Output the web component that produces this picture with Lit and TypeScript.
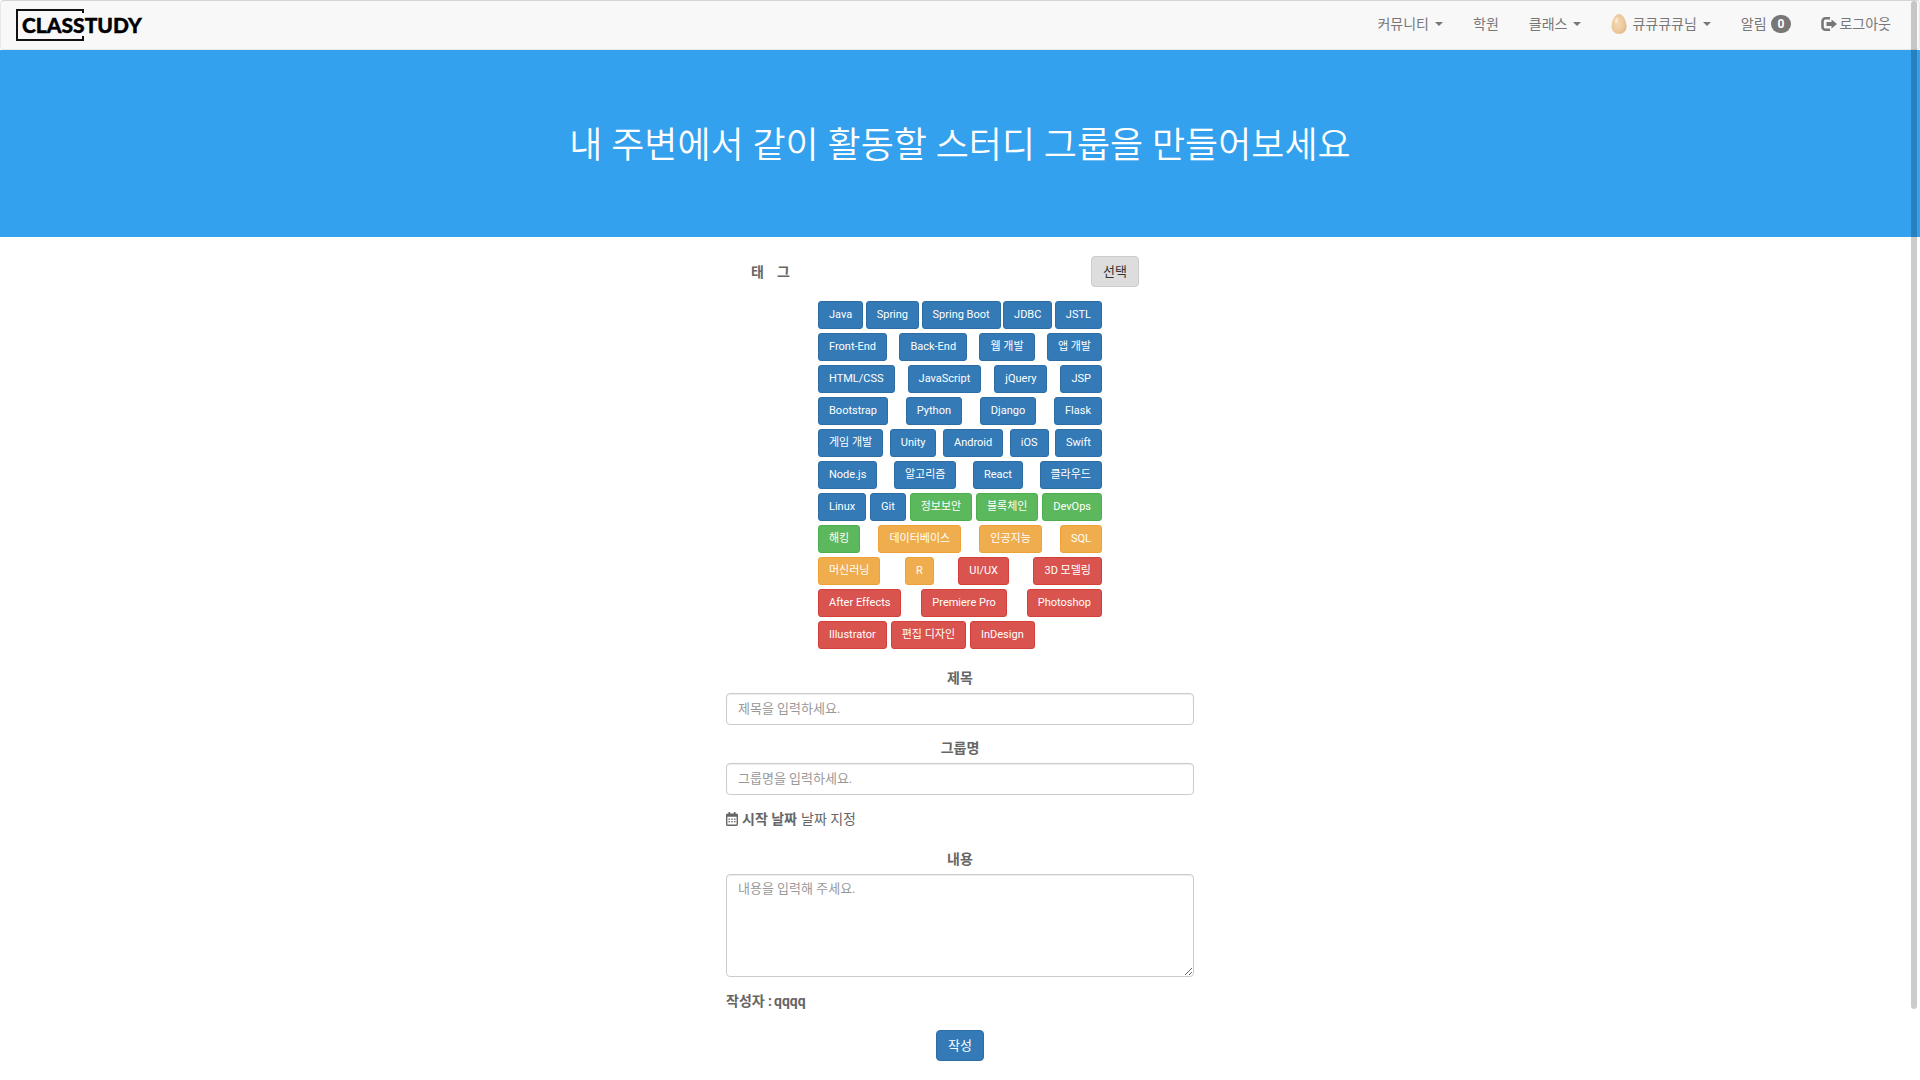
import { LitElement, html, css, svg } from "lit";
import { customElement } from "lit/decorators.js";

type Tone = "primary" | "success" | "warning" | "danger";
type Tag = [string, Tone];

const of = (tone: Tone, ...names: string[]): Tag[] => names.map((n) => [n, tone] as Tag);

const TAG_ROWS: Tag[][] = [
  of("primary", "Java", "Spring", "Spring Boot", "JDBC", "JSTL"),
  of("primary", "Front-End", "Back-End", "웹 개발", "앱 개발"),
  of("primary", "HTML/CSS", "JavaScript", "jQuery", "JSP"),
  of("primary", "Bootstrap", "Python", "Django", "Flask"),
  of("primary", "게임 개발", "Unity", "Android", "iOS", "Swift"),
  of("primary", "Node.js", "알고리즘", "React", "클라우드"),
  [...of("primary", "Linux", "Git"), ...of("success", "정보보안", "블록체인", "DevOps")],
  [...of("success", "해킹"), ...of("warning", "데이터베이스", "인공지능", "SQL")],
  [...of("warning", "머신러닝", "R"), ...of("danger", "UI/UX", "3D 모델링")],
  of("danger", "After Effects", "Premiere Pro", "Photoshop"),
  of("danger", "Illustrator", "편집 디자인", "InDesign"),
];

const eggIcon = html`<svg class="egg" viewBox="0 0 16 20" aria-hidden="true">
  <defs>
    <radialGradient id="shell" cx="0.4" cy="0.45" r="0.65">
      <stop offset="0" stop-color="#f3d9b4" />
      <stop offset="0.65" stop-color="#ecc99c" />
      <stop offset="1" stop-color="#dfb585" />
    </radialGradient>
  </defs>
  <path d="M8 0C12 0 15.500 7 15.500 12.300C15.500 17 12.200 20 8 20S.5 17 .5 12.300C.5 7 4 0 8 0Z" fill="url(#shell)" />
  <ellipse cx="5.500" cy="6.500" rx="1.500" ry="2.800" transform="rotate(22 5.500 6.500)" fill="#faead2" />
</svg>`;

const logoutIcon = html`<svg class="logout" viewBox="0 0 16 14" aria-hidden="true">
  <path d="M9 1.300H4.500A3 3 0 0 0 1.500 4.300V9.700A3 3 0 0 0 4.500 12.700H9" fill="none" stroke="currentColor" stroke-width="2.600" />
  <path d="M10.500 2.500L16 7L10.500 11.500V9H5.500V5H10.500Z" fill="currentColor" />
</svg>`;

const calendarIcon = html`<svg class="calendar" viewBox="0 0 12 14" aria-hidden="true">
  <rect x="0.700" y="2.200" width="10.600" height="11" rx="1" fill="none" stroke="currentColor" stroke-width="1.400" />
  <path d="M.7 2H11.300V4.800H.7ZM2.500 0H4.200V3H2.500ZM7.800 0H9.500V3H7.800Z" fill="currentColor" />
  ${[6.5, 9].map((y) => [2.5, 5.3, 8.1].map((x) => svg`<rect x=${x} y=${y} width="1.400" height="1.400" fill="currentColor" />`))}
</svg>`;

@customElement("app-root")
export class AppRoot extends LitElement {
  static styles = css`
    :host {
      display: block;
      position: relative;
      min-height: 100vh;
      background: #fff;
      color: #666;
      font: 14px/20px Roboto, "Noto Sans CJK KR", sans-serif;
    }
    * { box-sizing: border-box; }
    button, input, textarea { font: inherit; }

    .navbar {
      display: flex;
      justify-content: space-between;
      align-items: center;
      height: 50px;
      padding: 0 13px 0 14px;
      background: #f8f8f8;
      border: 1px solid #e7e7e7;
      border-top-color: #d4d4d4;
      border-radius: 4px;
    }
    .brand { display: block; height: 34px; }
    .brand svg { display: block; width: 132px; height: 34px; }
    .wordmark { font: 900 21px Lato, sans-serif; fill: #000; stroke: #000; stroke-width: 0.4px; }
    .menu {
      display: flex;
      margin: 0;
      padding: 0;
      list-style: none;
    }
    .menu a {
      display: flex;
      align-items: center;
      padding: 13px 15px 15px;
      color: #777;
      text-decoration: none;
    }
    .caret {
      width: 8px;
      margin-left: 6px;
      border: 4px solid transparent;
      border-top-color: currentColor;
      border-bottom: 0;
    }
    .egg { width: 16px; height: 20px; margin-right: 5px; }
    .logout { width: 16px; height: 14px; margin-right: 2px; }
    .badge {
      margin-left: 4px;
      padding: 4px 7px;
      border-radius: 10px;
      background: #777;
      color: #fff;
      font-size: 12px;
      font-weight: 700;
      line-height: 10px;
    }

    .hero {
      display: flex;
      justify-content: center;
      padding: 76px 16px 71px;
      background: #33a1ed;
      color: #fff;
    }
    .hero h1 {
      margin: 0;
      font-size: 36px;
      font-weight: 350;
      line-height: 40px;
      text-align: center;
    }

    .group-form {
      display: flex;
      flex-direction: column;
      width: 100%;
      max-width: 468px;
      margin: 0 auto;
      padding: 19px 0;
    }
    .tag-head {
      display: flex;
      justify-content: space-between;
      align-items: center;
      padding: 0 55px 0 25px;
    }
    .tag-title { display: flex; gap: 13px; font-weight: 700; }
    .btn {
      padding: 5px 11px;
      border: 1px solid #2e6da4;
      border-radius: 4px;
      background: #337ab7;
      color: #fff;
      font-size: 13px;
      line-height: 19px;
    }
    .btn.pick { border-color: #ccc; background: #ddd; color: #333; }
    .tags {
      display: flex;
      flex-direction: column;
      gap: 4px;
      width: 284px;
      margin: 14px auto 19px;
    }
    .tag-row { display: flex; justify-content: space-between; }
    .tag-row:last-child { justify-content: flex-start; gap: 4px; }
    .tag {
      padding: 5px 10px;
      border: 1px solid #2e6da4;
      border-radius: 3px;
      background: #337ab7;
      color: #fff;
      font-size: 11px;
      line-height: 16px;
      white-space: nowrap;
    }
    .tag.success { background: #5cb85c; border-color: #4cae4c; }
    .tag.warning { background: #f0ad4e; border-color: #eea236; }
    .tag.danger { background: #d9534f; border-color: #d43f3a; }

    .field {
      display: flex;
      flex-direction: column;
      gap: 5px;
      margin-bottom: 13px;
    }
    .field label { font-weight: 700; text-align: center; }
    .control {
      display: block;
      width: 100%;
      padding: 5px 11px;
      border: 1px solid #ccc;
      border-radius: 4px;
      background: #fff;
      box-shadow: inset 0 1px 1px rgba(0, 0, 0, 0.075);
      color: #555;
      font-size: 13px;
      line-height: 20px;
    }
    .control::placeholder { color: #999; opacity: 1; }
    textarea.control { height: 103px; padding-top: 4px; resize: vertical; }
    .date {
      display: flex;
      align-items: center;
      gap: 4px;
      margin: 1px 0 20px;
    }
    .calendar { width: 12px; height: 14px; }
    .author { display: flex; gap: 2px; margin-top: 1px; font-weight: 700; }
    .submit { align-self: center; margin-top: 19px; }

    .scroll-thumb {
      position: absolute;
      top: 1px;
      right: 3px;
      width: 6px;
      height: calc(100vh - 72px);
      border-radius: 3px;
      background: rgba(0, 0, 0, 0.2);
      pointer-events: none;
    }
  `;

  render() {
    return html`
      <nav class="navbar">
        <a class="brand" href="#" aria-label="CLASSTUDY">
          <svg viewBox="0 0 132 34">
            <path d="M68 5V2H2V32H68V28" fill="none" stroke="#111" stroke-width="2" />
            <text class="wordmark" x="7" y="25">CLASSTUDY</text>
          </svg>
        </a>
        <ul class="menu">
          <li><a href="#">커뮤니티<span class="caret"></span></a></li>
          <li><a href="#">학원</a></li>
          <li><a href="#">클래스<span class="caret"></span></a></li>
          <li><a href="#">${eggIcon}큐큐큐큐님<span class="caret"></span></a></li>
          <li><a href="#">알림<span class="badge">0</span></a></li>
          <li><a href="#">${logoutIcon}로그아웃</a></li>
        </ul>
      </nav>

      <header class="hero"><h1>내 주변에서 같이 활동할 스터디 그룹을 만들어보세요</h1></header>

      <form class="group-form" @submit=${(e: Event) => e.preventDefault()}>
        <div class="tag-head">
          <span class="tag-title"><span>태</span><span>그</span></span>
          <button type="button" class="btn pick">선택</button>
        </div>
        <div class="tags">
          ${TAG_ROWS.map(
            (row) => html`<div class="tag-row">
              ${row.map(([name, tone]) => html`<button type="button" class="tag ${tone}">${name}</button>`)}
            </div>`
          )}
        </div>
        <div class="field">
          <label for="title">제목</label>
          <input class="control" id="title" type="text" placeholder="제목을 입력하세요." />
        </div>
        <div class="field">
          <label for="group">그룹명</label>
          <input class="control" id="group" type="text" placeholder="그룹명을 입력하세요." />
        </div>
        <div class="date">${calendarIcon}<strong>시작 날짜</strong><span>날짜 지정</span></div>
        <div class="field">
          <label for="content">내용</label>
          <textarea class="control" id="content" placeholder="내용을 입력해 주세요."></textarea>
        </div>
        <div class="author"><span>작성자 :</span><span>qqqq</span></div>
        <button type="submit" class="btn submit">작성</button>
      </form>
      <div class="scroll-thumb"></div>
    `;
  }
}
